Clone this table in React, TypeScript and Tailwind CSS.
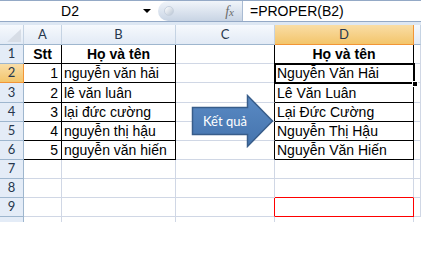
import type { ReactNode } from 'react'

type Side = 'grid' | 'black' | 'red' | 'none'

const rightCls: Record<Side, string> = {
  grid: 'border-r border-r-[#d0d7e5]',
  black: 'border-r border-r-black',
  red: 'border-r border-r-[#ff0000]',
  none: '',
}
const bottomCls: Record<Side, string> = {
  grid: 'border-b border-b-[#d0d7e5]',
  black: 'border-b border-b-black',
  red: 'border-b border-b-[#ff0000]',
  none: '',
}

// column widths incl. the right gridline
const COLS = { hdr: 24, A: 38, B: 114, C: 99, D: 139 }

interface CellProps {
  w: number | 'fill'
  r?: Side
  b?: Side
  align?: 'left' | 'center' | 'right'
  bold?: boolean
  children?: ReactNode
}

function Cell({ w, r = 'grid', b = 'grid', align = 'left', bold, children }: CellProps) {
  const width = w === 'fill' ? 'flex-1' : ''
  const justify = align === 'center' ? 'justify-center' : align === 'right' ? 'justify-end pr-[3px]' : 'justify-start pl-[2px]'
  return (
    <div
      className={`${width} ${rightCls[r]} ${bottomCls[b]} flex items-end ${justify} overflow-hidden whitespace-nowrap text-[14px] leading-[18px] text-black ${bold ? 'font-bold' : ''}`}
      style={w === 'fill' ? undefined : { width: w }}
    >
      {children}
    </div>
  )
}

function RowHead({ n, selected, h }: { n: number | ''; selected?: boolean; h: number }) {
  return (
    <div
      className={`w-[24px] shrink-0 flex items-center justify-center border-r text-[13px] font-['Lato',sans-serif] text-[#27374d] ${
        selected
          ? 'bg-gradient-to-b from-[#f9dea8] to-[#f3c56a] border-r-[#f29536] border-b border-b-[#f29536]'
          : 'bg-[#e4ecf7] border-r-[#9eb6ce] border-b border-b-[#9eb6ce]'
      }`}
      style={{ height: h }}
    >
      {n}
    </div>
  )
}

const rows = [
  { n: 1, a: 'Stt', b: 'Họ và tên', d: 'Họ và tên', head: true },
  { n: 2, a: '1', b: 'nguyễn văn hải', d: 'Nguyễn Văn Hải' },
  { n: 3, a: '2', b: 'lê văn luân', d: 'Lê Văn Luân' },
  { n: 4, a: '3', b: 'lại đức cường', d: 'Lại Đức Cường' },
  { n: 5, a: '4', b: 'nguyễn thị hậu', d: 'Nguyễn Thị Hậu' },
  { n: 6, a: '5', b: 'nguyễn văn hiến', d: 'Nguyễn Văn Hiến' },
]
const heights = [19, 19, 20, 19, 19, 19, 19, 19, 19]

function FormulaBar() {
  return (
    <div className="h-[25px] bg-[#dde7f3]">
      <div className="h-[22px] flex bg-white border-t border-b border-[#94a9c6]">
        <div className="w-[140px] flex items-center justify-center text-[14px] text-black">D2</div>
        <div className="w-[18px] flex items-center justify-start pl-[3px]">
          <div className="w-0 h-0 border-l-[4px] border-r-[4px] border-t-[4px] border-l-transparent border-r-transparent border-t-black" />
        </div>
        <div className="w-[85px] flex items-center rounded-l-full bg-gradient-to-b from-[#f1f5fa] to-[#c8d4e4] border-r border-[#a9bbd3]">
          <div className="ml-[6px] w-[10px] h-[10px] rounded-full bg-gradient-to-br from-white to-[#b9c5d4] border border-[#c7d1de]" />
          <span className="ml-auto mr-[8px] font-['Liberation_Serif',serif] italic text-[14px] text-[#6b6b6b]">
            f<span className="text-[11px]">x</span>
          </span>
        </div>
        <div className="flex-1 flex items-center pl-[7px] text-[14px] text-black">=PROPER(B2)</div>
      </div>
    </div>
  )
}

function ColumnHeaders() {
  const hdr = 'h-[20px] flex items-center justify-center text-[13px] font-[\'Lato\',sans-serif] text-[#27374d] border-b'
  const plain = `${hdr} bg-gradient-to-b from-[#f6f9fd] to-[#e2eaf5] border-r border-r-[#c5d3e3] border-b-[#9eb6ce]`
  return (
    <div className="flex">
      <div className={`${plain} border-r-[#9eb6ce] relative`} style={{ width: COLS.hdr }}>
        <svg width="14" height="13" className="absolute right-[2px] bottom-[2px]">
          <path d="M14 0 L14 13 L0 13 Z" fill="#d7dde6" />
        </svg>
      </div>
      <div className={plain} style={{ width: COLS.A }}>A</div>
      <div className={plain} style={{ width: COLS.B }}>B</div>
      <div className={plain} style={{ width: COLS.C }}>C</div>
      <div
        className={`${hdr} bg-gradient-to-b from-[#f9dda5] to-[#f3c56a] border-r border-r-[#f29536] border-b-[#f29536]`}
        style={{ width: COLS.D }}
      >
        D
      </div>
      <div className={`${plain} flex-1`} />
    </div>
  )
}

function Sheet() {
  return (
    <div className="font-['Liberation_Sans',Arial,sans-serif]">
      {rows.map((row, i) => (
        <div key={row.n} className="flex" style={{ height: heights[i] }}>
          <RowHead n={row.n} selected={row.n === 2} h={heights[i]} />
          <Cell w={COLS.A} r="black" b="black" align={row.head ? 'center' : 'right'} bold={row.head}>
            {row.a}
          </Cell>
          <Cell w={COLS.B} r="black" b="black" align={row.head ? 'center' : 'left'} bold={row.head}>
            {row.b}
          </Cell>
          <Cell w={COLS.C} r="black" />
          <Cell w={COLS.D} r="black" b="black" align={row.head ? 'center' : 'left'} bold={row.head}>
            {row.d}
          </Cell>
          <Cell w="fill" />
        </div>
      ))}
      {[7, 8, 9].map((n, i) => (
        <div key={n} className="flex" style={{ height: heights[6 + i] }}>
          <RowHead n={n} h={heights[6 + i]} />
          <Cell w={COLS.A} />
          <Cell w={COLS.B} />
          <Cell w={COLS.C} r={n === 9 ? 'red' : 'grid'} />
          <Cell w={COLS.D} r={n === 9 ? 'red' : 'grid'} b={n >= 8 ? 'red' : 'grid'} />
          <Cell w="fill" />
        </div>
      ))}
      {/* row 10, cut off by the window edge */}
      <div className="flex h-[5px]">
        <div className="w-[24px] bg-[#e4ecf7] border-r border-r-[#9eb6ce]" />
        <Cell w={COLS.A} b="none" />
        <Cell w={COLS.B} b="none" />
        <Cell w={COLS.C} b="none" />
        <Cell w={COLS.D} b="none" />
      </div>
    </div>
  )
}

function ResultArrow() {
  return (
    <>
      <svg className="absolute left-0 top-0 pointer-events-none" width="421" height="257">
        <defs>
          <linearGradient id="arrowFill" x1="0" y1="0" x2="0" y2="1">
            <stop offset="0" stopColor="#5a8ac4" />
            <stop offset="1" stopColor="#4574ad" />
          </linearGradient>
        </defs>
        <path
          d="M192.5 107.5 L247.5 107.5 L247.5 95.5 L272.5 121 L247.5 146.5 L247.5 134.5 L192.5 134.5 Z"
          fill="url(#arrowFill)"
          stroke="#385d8a"
          strokeWidth="1.5"
        />
      </svg>
      <div className="absolute left-[203px] top-[112px] text-[13px] leading-[18px] text-white font-['Lato',sans-serif]">
        Kết quả
      </div>
    </>
  )
}

export default function App() {
  return (
    <div className="relative w-[421px] h-[257px] overflow-hidden bg-white font-['Liberation_Sans',Arial,sans-serif]">
      <FormulaBar />
      <ColumnHeaders />
      <Sheet />
      <ResultArrow />
      {/* active cell D2 + fill handle */}
      <div className="absolute left-[274px] top-[63px] w-[141px] h-[21px] border-2 border-black pointer-events-none" />
      <div className="absolute left-[412px] top-[81px] w-[6px] h-[6px] bg-black border border-white" />
    </div>
  )
}
